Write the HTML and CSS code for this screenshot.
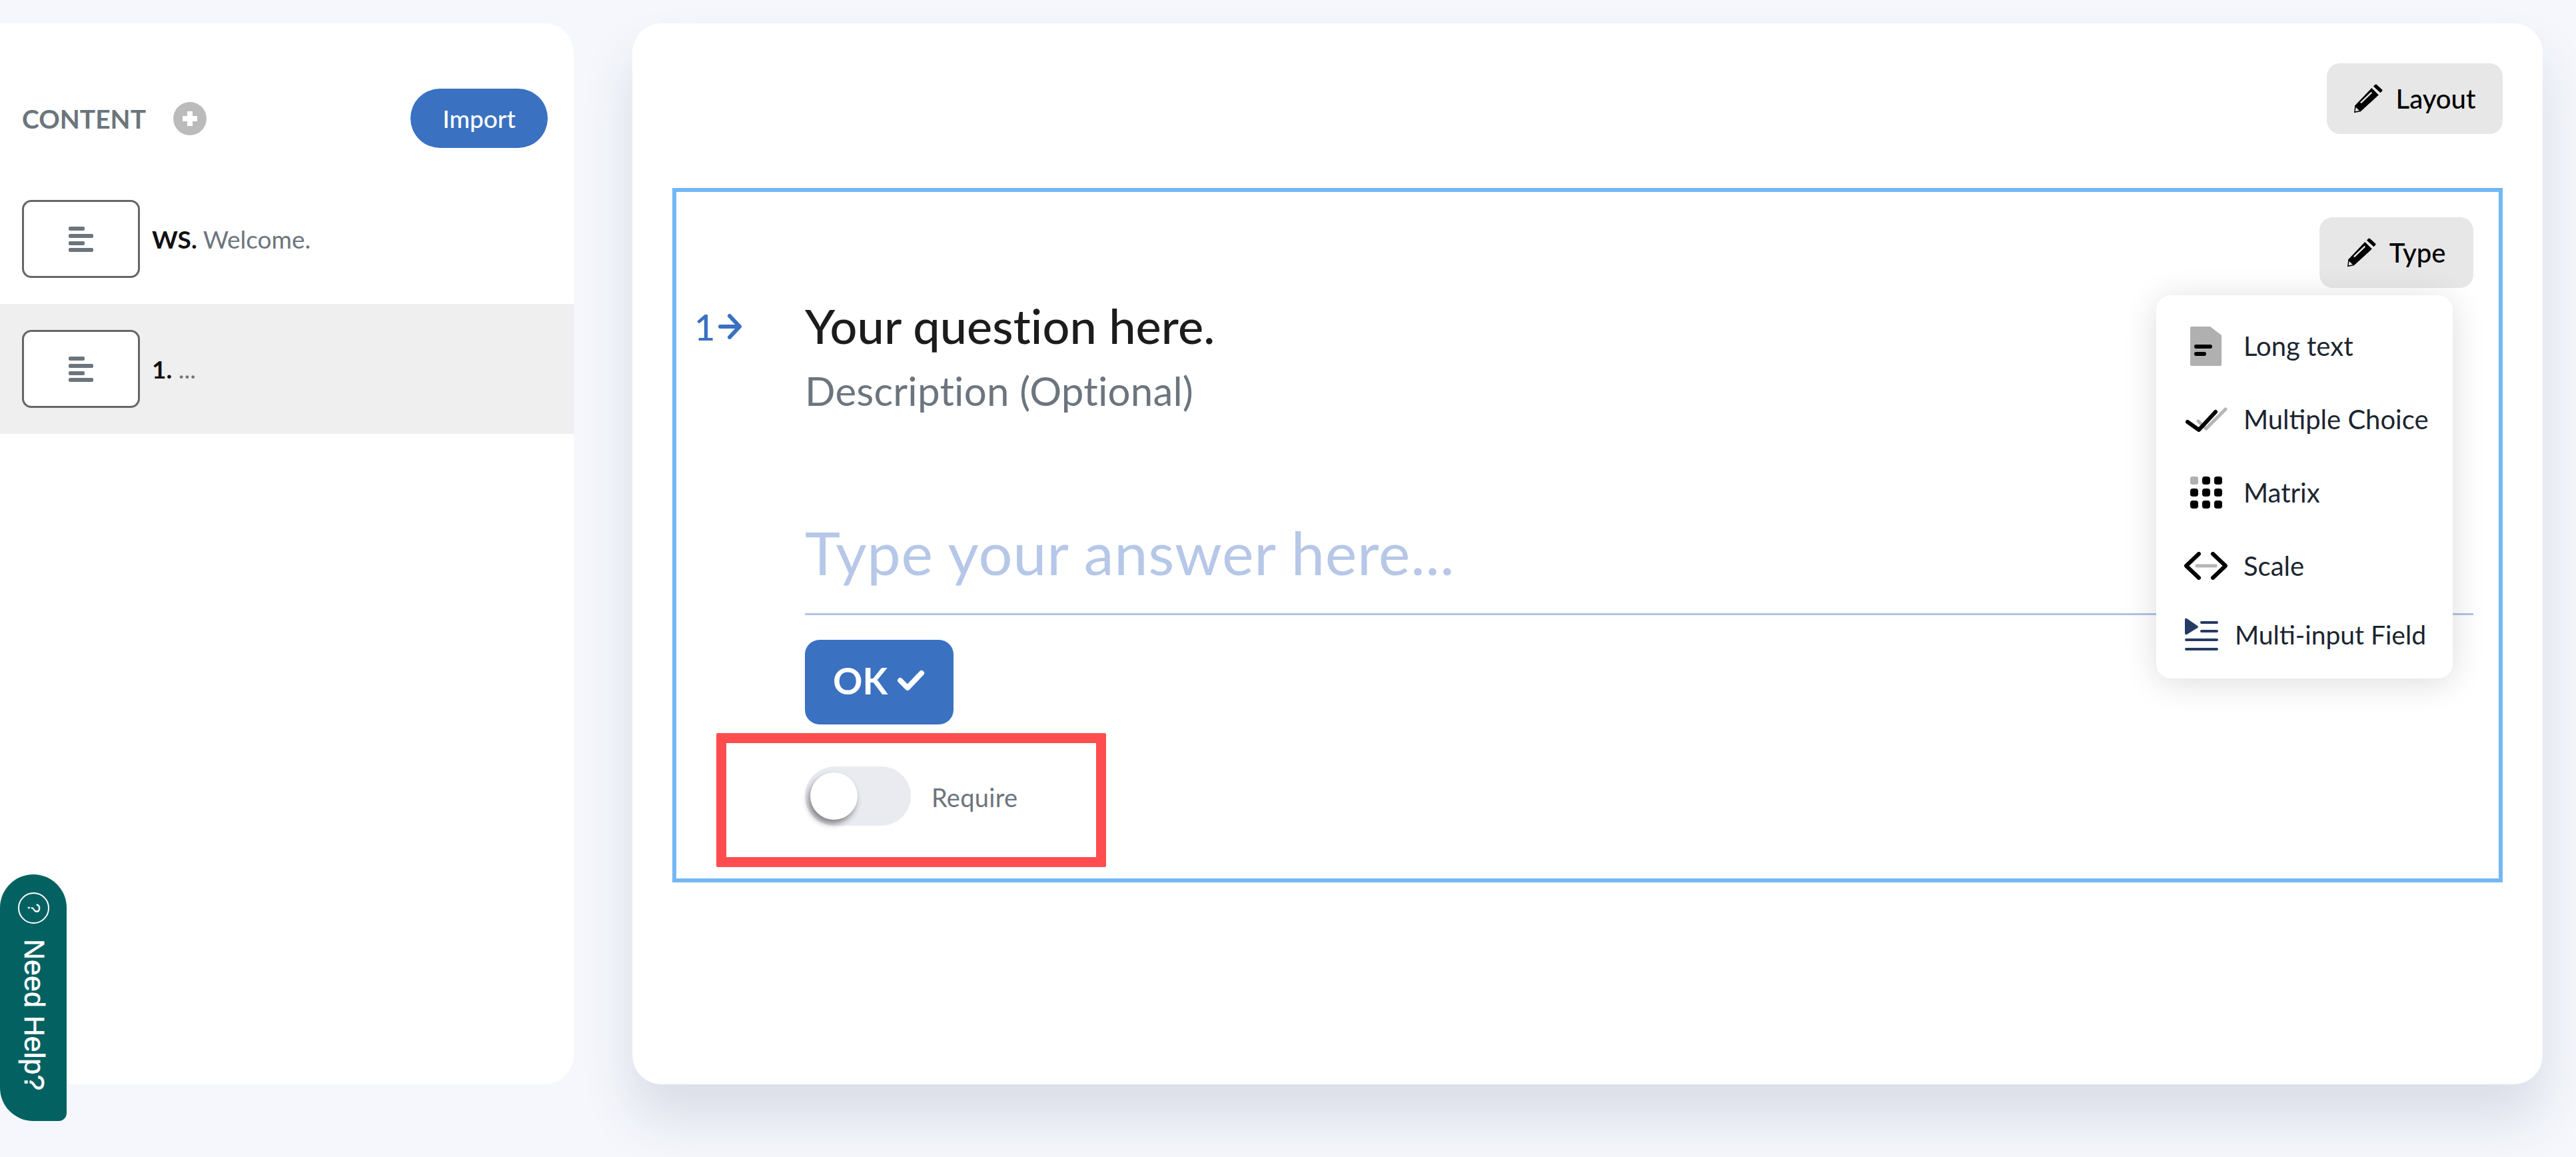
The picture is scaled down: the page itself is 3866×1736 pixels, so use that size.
FILE: index.html
```html
<!DOCTYPE html>
<html lang="en">
<head>
    <meta charset="UTF-8">
    <meta name="viewport" content="width=device-width, initial-scale=1.0">
    <title>Form Builder</title>
    <link rel="stylesheet" href="styles.css">
</head>
<body>
    <div class="app">
        <aside class="sidebar">
            <div class="sidebar-head">
                <span class="sidebar-title">CONTENT</span>
                <span class="add-btn">
                    <svg width="28" height="28" viewBox="0 0 28 28"><path d="M14 3v22M3 14h22" fill="none" stroke="#fff" stroke-width="8"/></svg>
                </span>
                <button class="import-btn">Import</button>
            </div>
            <div class="slide">
                <div class="thumb">
                    <svg width="37" height="38" viewBox="0 0 37 38"><rect width="24" height="6" rx="2"/><rect y="11" width="37" height="6" rx="2"/><rect y="22" width="24" height="6" rx="2"/><rect y="32" width="37" height="6" rx="2"/></svg>
                </div>
                <span class="slide-text"><b>WS.</b> Welcome.</span>
            </div>
            <div class="slide slide-active">
                <div class="thumb">
                    <svg width="37" height="38" viewBox="0 0 37 38"><rect width="24" height="6" rx="2"/><rect y="11" width="37" height="6" rx="2"/><rect y="22" width="24" height="6" rx="2"/><rect y="32" width="37" height="6" rx="2"/></svg>
                </div>
                <span class="slide-text"><b>1.</b> ...</span>
            </div>
        </aside>

        <main class="editor">
            <div class="editor-top">
                <button class="tool-btn tool-btn-layout">
                    <svg class="pencil" width="43" height="44" viewBox="0 0 131 133"><path d="M88 10l9-8q3-2 7 1l24 22q3 3 0 7l-8 8z"/><path d="M80 18l32 32-82 75-30 6 4-33z"/><path d="M80 38L30 86" stroke="#e7e7e7" stroke-width="7" fill="none"/><path d="M8 106l16 15-19 4z" fill="#e7e7e7"/></svg>
                    Layout
                </button>
            </div>

            <section class="question-frame">
                <div class="type-row">
                    <button class="tool-btn tool-btn-type">
                        <svg class="pencil" width="43" height="44" viewBox="0 0 131 133"><path d="M88 10l9-8q3-2 7 1l24 22q3 3 0 7l-8 8z"/><path d="M80 18l32 32-82 75-30 6 4-33z"/><path d="M80 38L30 86" stroke="#e7e7e7" stroke-width="7" fill="none"/><path d="M8 106l16 15-19 4z" fill="#e7e7e7"/></svg>
                        Type
                    </button>
                </div>

                <div class="question">
                    <div class="question-num">
                        <span>1</span>
                        <svg width="36" height="38" viewBox="0 0 36 38"><path d="M3 19h28M17 3l15 16-15 16" fill="none" stroke="#3a71c1" stroke-width="6" stroke-linecap="round" stroke-linejoin="round"/></svg>
                    </div>
                    <div class="question-body">
                        <h1>Your question here.</h1>
                        <p class="description">Description (Optional)</p>
                        <div class="answer">Type your answer here...</div>
                        <button class="ok-btn">OK
                            <svg width="42" height="32" viewBox="0 0 42 32"><path d="M5 16l11 11L37 5" fill="none" stroke="#fff" stroke-width="8" stroke-linecap="round" stroke-linejoin="round"/></svg>
                        </button>
                        <div class="require">
                            <span class="switch"><span class="knob"></span></span>
                            <span class="require-label">Require</span>
                        </div>
                    </div>
                </div>

                <div class="type-menu">
                    <div class="menu-item">
                        <span class="menu-icon">
                            <svg width="47" height="59" viewBox="0 0 47 59"><path d="M2 0h28l17 13v44q0 2-2 2H2q-2 0-2-2V2q0-2 2-2z" fill="#b0b0b0"/><path d="M9 30h21M9 41h12" stroke="#000" stroke-width="6" stroke-linecap="round"/></svg>
                        </span>
                        Long text
                    </div>
                    <div class="menu-item">
                        <span class="menu-icon">
                            <svg width="65" height="37" viewBox="-4 0 65 37"><path d="M17 21l12 11L58 3" fill="none" stroke="#b5b5b5" stroke-width="5" stroke-linecap="round"/><path d="M1 22l17 12L43 7" fill="none" stroke="#000" stroke-width="6" stroke-linecap="round" stroke-linejoin="round"/></svg>
                        </span>
                        Multiple Choice
                    </div>
                    <div class="menu-item">
                        <span class="menu-icon">
                            <svg width="48" height="48" viewBox="0 0 48 48"><rect width="12" height="12" rx="3" fill="#b0b0b0"/><rect x="18" width="12" height="12" rx="4"/><rect x="36" width="12" height="12" rx="4"/><rect y="18" width="12" height="12" rx="4"/><rect x="18" y="18" width="12" height="12" rx="4"/><rect x="36" y="18" width="12" height="12" rx="4"/><rect y="36" width="12" height="12" rx="4"/><rect x="18" y="36" width="12" height="12" rx="4"/><rect x="36" y="36" width="12" height="12" rx="4"/></svg>
                        </span>
                        Matrix
                    </div>
                    <div class="menu-item">
                        <span class="menu-icon">
                            <svg width="65" height="42" viewBox="0 0 65 42"><path d="M19 21h28" stroke="#b5b5b5" stroke-width="5" stroke-linecap="round"/><path d="M22 3L3 21l19 18M43 3l19 18-19 18" fill="none" stroke="#000" stroke-width="6" stroke-linecap="round" stroke-linejoin="round"/></svg>
                        </span>
                        Scale
                    </div>
                    <div class="menu-item menu-item-multi">
                        <span class="menu-icon">
                            <svg width="50" height="48" viewBox="0 0 50 48"><path d="M3 0l16 11q2 2 0 3L3 24q-3 1-3-2V2q0-3 3-2z" fill="#253b63"/><path d="M25 6h23M25 19h23M2 32h46M2 46h46" stroke="#253b63" stroke-width="4" stroke-linecap="round"/></svg>
                        </span>
                        Multi-input Field
                    </div>
                </div>

                <div class="highlight-box"></div>
            </section>
        </main>
    </div>

    <a class="help-tab">
        <span class="help-icon"><span>?</span></span>
        <span class="help-text">Need Help?</span>
    </a>
</body>
</html>
```

FILE: styles.css
```css
* {
    box-sizing: border-box;
}
html, body {
    height: 100%;
}
body {
    margin: 0;
    font-family: Lato, "Noto Sans", Arial, sans-serif;
    background-color: #f5f7fc;
    overflow: hidden;
}
button {
    font-family: inherit;
    border: 0;
}
.app {
    display: flex;
    gap: 88px;
    padding: 35px 50px 0 0;
}

/* left column */
.sidebar {
    width: 861px;
    height: 1592px;
    background: #fff;
    border-radius: 0 44px 44px 0;
    padding-top: 98px;
}
.sidebar-head {
    display: flex;
    align-items: center;
    height: 89px;
    padding: 0 39px 0 33px;
    margin-bottom: 39px;
}
.sidebar-title {
    font-size: 39px;
    font-weight: 700;
    color: #6c757d;
}
.add-btn {
    display: flex;
    align-items: center;
    justify-content: center;
    width: 50px;
    height: 50px;
    margin-left: 41px;
    border-radius: 50%;
    background: #bbb;
}
.import-btn {
    margin-left: auto;
    width: 206px;
    height: 89px;
    border-radius: 45px;
    background: #3a71c1;
    color: #fff;
    font-size: 37px;
    font-weight: 500;
}
.slide {
    display: flex;
    align-items: center;
    gap: 18px;
    height: 195px;
    padding-left: 33px;
}
.slide-active {
    background: #efefef;
}
.thumb {
    display: flex;
    align-items: center;
    justify-content: center;
    width: 177px;
    height: 117px;
    background: #fff;
    border: 3px solid #666;
    border-radius: 14px;
    fill: #6c757d;
}
.slide-text {
    font-size: 37px;
    color: #6c757d;
}
.slide-text b {
    color: #111;
}

/* right panel */
.editor {
    width: 2867px;
    height: 1592px;
    background: #fff;
    border-radius: 44px;
    padding: 60px 60px 0;
    box-shadow: 0 50px 80px rgba(40, 50, 90, 0.135);
}
.editor-top {
    display: flex;
    justify-content: flex-end;
    margin-bottom: 81px;
}
.tool-btn {
    display: flex;
    align-items: center;
    justify-content: center;
    gap: 20px;
    height: 106px;
    background: #e7e7e7;
    border-radius: 20px;
    font-size: 40px;
    font-weight: 500;
    color: #000;
}
.tool-btn-layout {
    width: 264px;
}
.tool-btn-type {
    width: 231px;
}
.question-frame {
    position: relative;
    height: 1042px;
    border: 6px solid #74b7f5;
    padding: 38px 38px 0 0;
}
.type-row {
    display: flex;
    justify-content: flex-end;
}
.question {
    display: grid;
    grid-template-columns: 193px 1fr;
    margin-top: 14px;
}
.question-num {
    display: flex;
    align-items: center;
    gap: 5px;
    height: 64px;
    margin-top: 12px;
    padding-left: 27px;
    font-size: 54px;
    font-weight: 500;
    color: #3a71c1;
}
.question-body h1 {
    margin: 0;
    font-size: 72px;
    line-height: 84px;
    font-weight: 500;
    letter-spacing: 0.1px;
    color: #1c1c1c;
}
.description {
    margin: 22px 0 0;
    font-size: 60px;
    line-height: 68px;
    letter-spacing: 0.2px;
    color: #6c757d;
}
.answer {
    margin-top: 74px;
    height: 229px;
    padding-top: 83px;
    font-size: 90px;
    line-height: 102px;
    letter-spacing: 0.8px;
    color: #b6c7e8;
    border-bottom: 3px solid #b0c3e6;
}
.ok-btn {
    display: flex;
    align-items: center;
    gap: 14px;
    width: 223px;
    height: 127px;
    margin-top: 37px;
    padding: 0 0 5px 42px;
    background: #3a71c1;
    border-radius: 22px;
    color: #fff;
    font-size: 55px;
    font-weight: 700;
}
.require {
    display: flex;
    align-items: center;
    gap: 31px;
    margin-top: 63px;
}
.switch {
    display: flex;
    align-items: center;
    width: 159px;
    height: 89px;
    padding-left: 8px;
    background: #eaebf1;
    border-radius: 45px;
}
.knob {
    width: 71px;
    height: 71px;
    background: #fff;
    border-radius: 50%;
    box-shadow: -3px 6px 10px rgba(0, 0, 0, 0.45);
}
.require-label {
    padding-top: 3px;
    font-size: 38px;
    letter-spacing: 0.3px;
    color: #6c757d;
}
.type-menu {
    position: absolute;
    top: 155px;
    right: 69px;
    width: 445px;
    height: 575px;
    padding: 21px 0 0 42px;
    background: #fff;
    border-radius: 22px;
    box-shadow: 0 6px 50px rgba(0, 0, 0, 0.14);
}
.menu-item {
    display: flex;
    align-items: center;
    height: 110px;
    font-size: 40px;
    color: #1c2530;
}
.menu-icon {
    display: flex;
    justify-content: center;
    width: 65px;
    margin-right: 24px;
}
.menu-item-multi {
    height: 95px;
    font-size: 39px;
}
.menu-item-multi .menu-icon {
    justify-content: flex-start;
    width: 50px;
    margin: 0 25px 0 1px;
}
.highlight-box {
    position: absolute;
    left: 60px;
    top: 812px;
    width: 585px;
    height: 201px;
    border: 15px solid #ff4d4f;
    border-radius: 2px;
}

/* help tab */
.help-tab {
    position: fixed;
    left: 0;
    top: 1312px;
    display: flex;
    flex-direction: column;
    align-items: center;
    gap: 23px;
    width: 100px;
    height: 370px;
    padding-top: 27px;
    background: #036161;
    border-radius: 50px 50px 12px 50px;
    color: #fff;
}
.help-icon {
    display: flex;
    align-items: center;
    justify-content: center;
    width: 47px;
    height: 47px;
    border: 2px solid #fff;
    border-radius: 50%;
    font-family: "Liberation Sans", Arial, sans-serif;
    font-size: 26px;
}
.help-icon span {
    transform: rotate(90deg);
}
.help-text {
    margin-left: 4px;
    writing-mode: vertical-rl;
    font-family: "Liberation Sans", Arial, sans-serif;
    font-size: 43px;
    line-height: 50px;
    -webkit-text-stroke: 0.6px #fff;
}
```
